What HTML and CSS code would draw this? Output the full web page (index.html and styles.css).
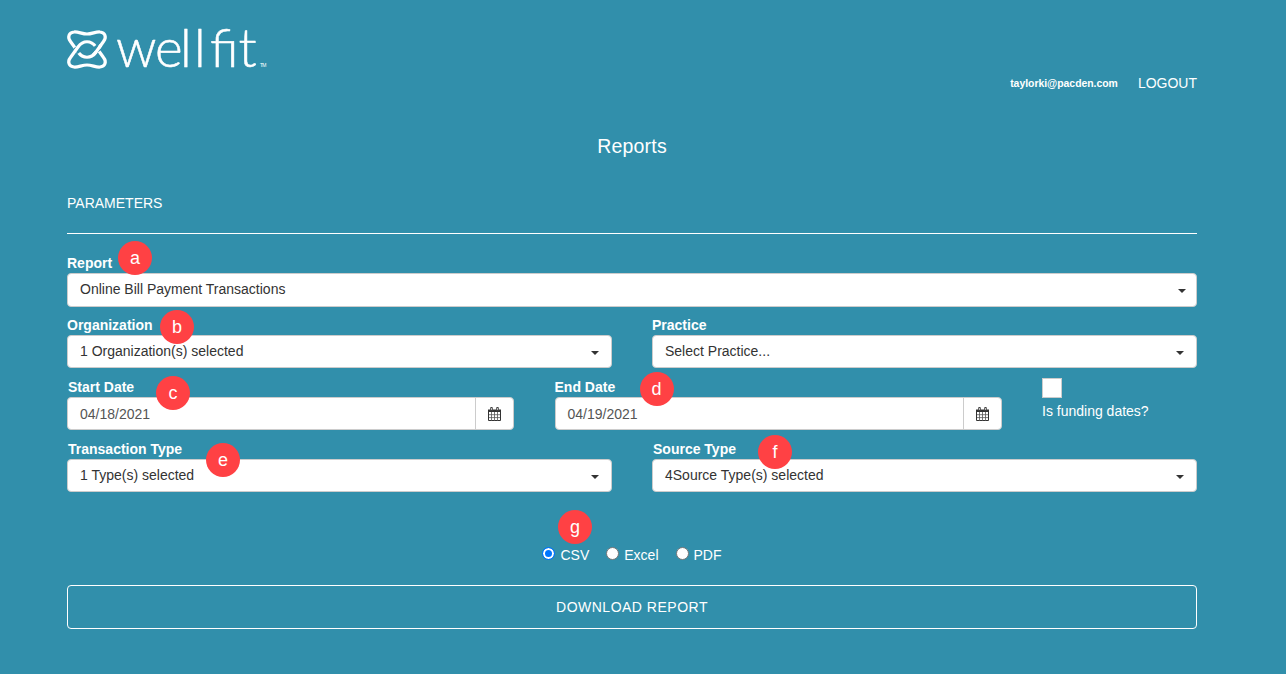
FILE: index.html
```html
<!DOCTYPE html>
<html lang="en">
<head>
<meta charset="utf-8">
<title>Reports</title>
<link rel="stylesheet" href="styles.css">
</head>
<body>
<svg class="sprite" width="0" height="0">
  <symbol id="calendar" viewBox="0 0 13 14">
    <path fill="#fff" stroke="#333" d="M.5 3.500h12v10H.5z"/>
    <path fill="#333" d="M0 2.500h13V5H0z"/>
    <path fill="none" stroke="#555" stroke-width=".8" d="M3.500 5v9M6.500 5v9M9.500 5v9M1 7.700h11M1 10.600h11"/>
    <path fill="#fff" stroke="#333" stroke-width=".9" d="M2.700.5h1.600v3H2.700zM8.700.5h1.600v3H8.700z"/>
  </symbol>
</svg>
<div class="page">
  <header class="header">
    <svg class="logo" width="210" height="56" viewBox="0 0 210 56">
      <g class="mark">
        <path d="M7 8C11 7.500 15 10 20 10S29 7.500 33 8C38 8.500 40 13 36.500 17.500L29 28C24 35 16 35 11 28L3.500 17.500C0 13 2 8.500 7 8Z"/>
        <path class="gap" d="M8.500 23L12.500 28.500"/>
        <path d="M7 43C11 43.500 15 41 20 41S29 43.500 33 43C38 42.500 40 38 36.500 33.500L29 23C24 16 16 16 11 23L3.500 33.500C0 38 2 42.500 7 43Z"/>
        <path class="gap" d="M28 22L32 27.500"/>
        <path d="M26 31.200Q27.600 30 29 28L34 21"/>
      </g>
      <text class="word" x="49 88 113 127 143" y="43">wellfit</text>
      <text class="tm" x="193" y="43" textLength="6.500">TM</text>
    </svg>
    <nav class="account"><span class="email">taylorki@pacden.com</span><a class="logout">LOGOUT</a></nav>
  </header>
  <h1 class="title">Reports</h1>
  <h2 class="section">PARAMETERS</h2>
  <form class="form">
    <div class="row">
      <div class="field"><label class="label">Report</label><div class="box select first"><span>Online Bill Payment Transactions</span><i class="caret"></i></div><b class="badge badge-a">a</b></div>
    </div>
    <div class="row halves">
      <div class="field"><label class="label">Organization</label><div class="box select"><span>1 Organization(s) selected</span><i class="caret"></i></div><b class="badge badge-b">b</b></div>
      <div class="field"><label class="label">Practice</label><div class="box select"><span>Select Practice...</span><i class="caret"></i></div></div>
    </div>
    <div class="row dates">
      <div class="field"><label class="label inset">Start Date</label><div class="box date"><span>04/18/2021</span><span class="addon"><svg width="13" height="14"><use href="#calendar"/></svg></span></div><b class="badge badge-c">c</b></div>
      <div class="field"><label class="label">End Date</label><div class="box date"><span>04/19/2021</span><span class="addon"><svg width="13" height="14"><use href="#calendar"/></svg></span></div><b class="badge badge-d">d</b></div>
      <div class="funding"><span class="check"></span><span>Is funding dates?</span></div>
    </div>
    <div class="row halves">
      <div class="field"><label class="label inset">Transaction Type</label><div class="box select"><span>1 Type(s) selected</span><i class="caret"></i></div><b class="badge badge-e">e</b></div>
      <div class="field"><label class="label inset">Source Type</label><div class="box select"><span>4Source Type(s) selected</span><i class="caret"></i></div><b class="badge badge-f">f</b></div>
    </div>
    <div class="formats">
      <span class="format"><i class="radio on"></i>CSV</span>
      <span class="format"><i class="radio"></i>Excel</span>
      <span class="format"><i class="radio"></i>PDF</span>
      <b class="badge badge-g">g</b>
    </div>
    <button class="download" type="button">DOWNLOAD REPORT</button>
  </form>
</div>
</body>
</html>
```
FILE: styles.css
```css
* { box-sizing: border-box; }
body {
  margin: 0;
  height: 674px;
  overflow: hidden;
  background: #318fab;
  color: #fff;
  font: 14px/20px "Liberation Sans", Arial, sans-serif;
}
.sprite { display: block; }
.page { width: 1130px; margin-left: 67px; padding-top: 24px; }
.header { height: 70px; display: flex; justify-content: space-between; align-items: flex-start; }
.logo { display: block; overflow: visible; }
.mark path { fill: none; stroke: #fff; stroke-width: 3.2; stroke-linecap: butt; }
.mark .gap { stroke: #318fab; stroke-width: 5; }
.word { font: 300 53px Lato, sans-serif; fill: #fff; stroke: #fff; stroke-width: .5; stroke-linejoin: round; }
.tm { font: 5px "Liberation Sans", sans-serif; fill: #fff; }
.account { align-self: flex-end; display: flex; gap: 20px; align-items: center; }
.email { font-size: 10.4px; font-weight: 700; padding-top: 3px; }
.logout { font-size: 14px; }
.title { margin: 41px 0 0; font-size: 19.5px; font-weight: 400; line-height: 22px; text-align: center; letter-spacing: .2px; }
.section { margin: 36px 0 19px; padding-bottom: 20px; border-bottom: 1px solid #fff; font-size: 14px; font-weight: 400; line-height: 20px; }
.row { display: grid; height: 62px; }
.halves { grid-template-columns: 545px 545px; column-gap: 40px; }
.dates { grid-template-columns: 447px 447px 155px; column-gap: 40.5px; }
.field { position: relative; }
.label { display: block; height: 20px; font-weight: 700; }
.inset { padding-left: 1px; }
.box { height: 33px; display: flex; justify-content: space-between; background: #fff; border: 1px solid #ccc; border-radius: 4px; color: #333; line-height: 31px; padding-left: 12px; }
.first { height: 34px; }
.select { padding-right: 12px; }
.first.select { padding-right: 10px; }
.caret { margin-top: 15px; width: 0; height: 0; border: 4px solid transparent; border-top-color: #333; border-bottom: 0; }
.date { color: #555; line-height: 32px; }
.addon { width: 38px; display: flex; align-items: center; justify-content: center; border-left: 1px solid #ccc; }
.funding { padding-top: 1px; display: flex; flex-direction: column; gap: 3px; }
.check { width: 20px; height: 20px; background: #fff; border: 1px solid #ccc; }
.badge { position: absolute; width: 34px; height: 34px; border-radius: 50%; background: #ff4144; color: #fff; font: 400 18px/34px "Liberation Sans", Arial, sans-serif; text-align: center; }
.badge-a { left: 51px; top: -12px; }
.badge-b { left: 93px; top: -5px; }
.badge-c { left: 89px; top: -1px; }
.badge-d { left: 85px; top: -5px; }
.badge-e { left: 139px; top: 4px; }
.badge-f { left: 106px; top: -4px; }
.badge-g { left: 491px; top: -35px; }
.formats { position: relative; margin-top: 44px; height: 20px; display: flex; justify-content: center; gap: 17px; }
.format { display: flex; gap: 5px; }
.radio { width: 13px; height: 13px; margin-top: 2px; border: 1px solid #767676; border-radius: 50%; background: #fff; }
.radio.on { border-color: #0075ff; background: #0075ff; box-shadow: inset 0 0 0 2px #fff; }
.download { display: block; width: 1130px; height: 44px; margin-top: 20px; padding: 0; background: none; border: 1px solid #fff; border-radius: 4px; color: #fff; font: 14px/20px "Liberation Sans", Arial, sans-serif; letter-spacing: .5px; }
```
